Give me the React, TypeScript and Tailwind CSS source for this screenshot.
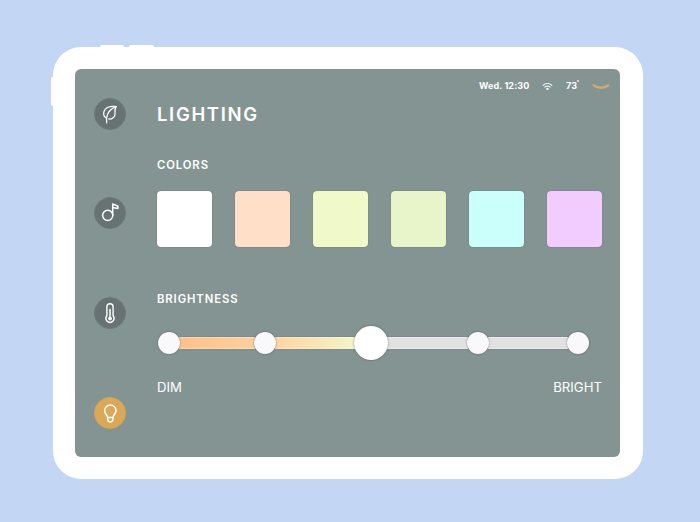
import React from "react";

const SWATCHES = ["bg-white", "bg-[#ffdfc8]", "bg-[#f0f9ca]", "bg-[#e8f4c9]", "bg-[#cafffc]", "bg-[#f2cbff]"];

function RailIcon({ active, children }: { active?: boolean; children: React.ReactNode }) {
  return (
    <div
      className={`flex h-8 w-8 items-center justify-center rounded-full border ${
        active ? "border-[#cda661] bg-[#dba858]" : "border-[#6d7978] bg-[#677372]"
      }`}
    >
      <svg
        viewBox="0 0 32 32"
        className="h-8 w-8 shrink-0"
        fill="none"
        stroke="#fff"
        strokeWidth="1.5"
        strokeLinecap="round"
        strokeLinejoin="round"
      >
        {children}
      </svg>
    </div>
  );
}

function Knob({ large }: { large?: boolean }) {
  return (
    <div
      className={`relative z-10 shrink-0 rounded-full shadow-[0_0_2px_rgba(50,60,60,0.65)] ${
        large ? "h-[34px] w-[34px] bg-white" : "h-[22px] w-[22px] bg-[#f9f9fc]"
      }`}
    />
  );
}

function Segment({ className }: { className: string }) {
  return <div className={`-mx-px h-3 shrink-0 border-y border-white/30 shadow-[0_0_1px_rgba(60,70,70,0.6)] ${className}`} />;
}

export default function App() {
  return (
    <div className="flex h-[522px] w-[700px] flex-col overflow-hidden bg-[#c3d7f5] font-['Inter','Liberation_Sans',sans-serif] text-white">
      <div className="ml-[100px] mt-[45px] flex h-[2px] gap-[5px]">
        <div className="w-[24px] rounded-t-sm bg-white" />
        <div className="w-[25px] rounded-t-sm bg-white" />
      </div>
      <div className="flex">
        <div className="ml-[51px] mt-[30px] h-[29px] w-[2px] rounded-l-sm bg-white" />
        <div className="h-[432px] w-[590px] rounded-[28px] bg-white px-[22px] pt-[22px]">
          <div className="flex h-[388px] w-[545px] overflow-hidden rounded-[6px] bg-[#849493]">
            <nav className="ml-[19px] flex w-8 flex-col gap-[67.8px] pt-[28.5px]">
              <RailIcon>
                <path d="M22.3 8.6C16 7.6 10.6 9.4 9.8 14.2C9.3 17 10.5 19.3 12.6 20.2M22.3 8.6C20 11 21.4 14.2 20.9 17C20.3 19.6 17.4 21.6 14.8 20.9M12.7 24.8C11.6 18.8 14 12 20.6 9.3" strokeWidth="1.25" />
              </RailIcon>
              <RailIcon>
                <circle cx="13.7" cy="18.3" r="5.1" />
                <path d="M18.7 18.3V7L23.9 9.1V11.5L18.7 10.6" />
              </RailIcon>
              <RailIcon>
                <path d="M12.9 18.8V9.8A3.1 3.1 0 0 1 19.1 9.8V18.8A4 4 0 1 1 12.9 18.8Z" strokeWidth="1.4" />
                <circle cx="16" cy="21.6" r="1.9" fill="#fff" stroke="none" />
                <path d="M16 12.4V21" />
              </RailIcon>
              <RailIcon active>
                <path d="M13.7 20.6C13.7 17.8 10.6 17 10.6 13.7A5.7 5.7 0 0 1 22 13.7C22 17 18.9 17.8 18.9 20.6ZM13.7 20.6V22.6A2.6 2.3 0 0 0 18.9 22.6V20.6" />
              </RailIcon>
            </nav>
            <main className="ml-[31px] flex w-[445px] flex-col">
              <div className="flex h-[34px] items-center justify-end">
                <span className="w-[63px] whitespace-nowrap text-[9px] font-bold leading-3 tracking-[0.1px]">Wed. 12:30</span>
                <svg viewBox="0 0 12 9" className="mr-[13px] h-[9px] w-[11px]" fill="none" stroke="#fff" strokeWidth="1.1" strokeLinecap="round">
                  <path d="M1.2 3.2C4 .6 8 .6 10.8 3.2M3.1 5.2C4.8 3.7 7.2 3.7 8.9 5.2" />
                  <circle cx="6" cy="7.1" r=".7" fill="#fff" />
                </svg>
                <span className="text-[9px] font-bold leading-3">73</span>
                <span className="mb-[10px] mr-[13.5px] h-[2px] w-[1.5px] rounded-full bg-white/80" />
                <svg viewBox="0 0 18 6" className="-mr-[8px] h-[6px] w-[18px]" fill="none" strokeLinecap="round">
                  <path d="M1.5 2.2C6 5 12 5 16.5 2.2" stroke="#cda56c" strokeWidth="2.4" />
                  <path d="M2 3.3C6 5.8 12 5.8 16 3.3" stroke="#c8bd90" strokeWidth=".7" />
                </svg>
              </div>
              <h1 className="mt-[-1.5px] h-[24px] text-[18.5px] font-semibold leading-[24px] tracking-[1.65px]">LIGHTING</h1>
              <h2 className="mt-[31px] h-4 text-[11.3px] font-semibold leading-4 tracking-[0.9px]">COLORS</h2>
              <div className="mt-[18.5px] flex justify-between">
                {SWATCHES.map((c) => (
                  <div key={c} className={`h-[56px] w-[55px] rounded-[4px] shadow-[0_0_1px_rgba(60,70,75,0.8)] ${c}`} />
                ))}
              </div>
              <h2 className="mt-[44px] h-4 text-[11.3px] font-semibold leading-4 tracking-[0.9px]">BRIGHTNESS</h2>
              <div className="mt-[19.3px] flex h-[34px] w-[435px] items-center pl-[0.5px]">
                <Knob />
                <Segment className="w-[76.5px] bg-linear-to-r from-[#ffc288] to-[#fdcf9e]" />
                <Knob />
                <Segment className="w-[80px] bg-linear-to-r from-[#fdd5a2] to-[#f3f4c8]" />
                <Knob large />
                <Segment className="w-[81px] bg-[#e2e2e2]" />
                <Knob />
                <Segment className="w-[80px] bg-[#e2e2e2]" />
                <Knob />
              </div>
              <div className="mt-[17.2px] flex justify-between text-[13.2px] leading-5">
                <span>DIM</span>
                <span>BRIGHT</span>
              </div>
            </main>
          </div>
        </div>
      </div>
    </div>
  );
}
